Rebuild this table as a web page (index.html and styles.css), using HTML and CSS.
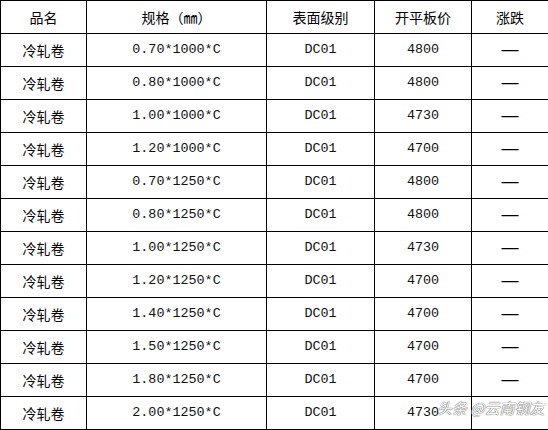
FILE: index.html
```html
<!DOCTYPE html>
<html lang="zh">
<head>
<meta charset="utf-8">
<link rel="stylesheet" href="styles.css">
</head>
<body>
<div class="wrap">
<table class="price">
<colgroup>
<col class="c1"><col class="c2"><col class="c3"><col class="c4"><col class="c5">
</colgroup>
<thead>
<tr><th>品名</th><th>规格（㎜）</th><th>表面级别</th><th>开平板价</th><th>涨跌</th></tr>
</thead>
<tbody>
<tr><td>冷轧卷</td><td class="m">0.70*1000*C</td><td class="m">DC01</td><td class="m">4800</td><td class="d">—</td></tr>
<tr><td>冷轧卷</td><td class="m">0.80*1000*C</td><td class="m">DC01</td><td class="m">4800</td><td class="d">—</td></tr>
<tr><td>冷轧卷</td><td class="m">1.00*1000*C</td><td class="m">DC01</td><td class="m">4730</td><td class="d">—</td></tr>
<tr><td>冷轧卷</td><td class="m">1.20*1000*C</td><td class="m">DC01</td><td class="m">4700</td><td class="d">—</td></tr>
<tr><td>冷轧卷</td><td class="m">0.70*1250*C</td><td class="m">DC01</td><td class="m">4800</td><td class="d">—</td></tr>
<tr><td>冷轧卷</td><td class="m">0.80*1250*C</td><td class="m">DC01</td><td class="m">4800</td><td class="d">—</td></tr>
<tr><td>冷轧卷</td><td class="m">1.00*1250*C</td><td class="m">DC01</td><td class="m">4730</td><td class="d">—</td></tr>
<tr><td>冷轧卷</td><td class="m">1.20*1250*C</td><td class="m">DC01</td><td class="m">4700</td><td class="d">—</td></tr>
<tr><td>冷轧卷</td><td class="m">1.40*1250*C</td><td class="m">DC01</td><td class="m">4700</td><td class="d">—</td></tr>
<tr><td>冷轧卷</td><td class="m">1.50*1250*C</td><td class="m">DC01</td><td class="m">4700</td><td class="d">—</td></tr>
<tr><td>冷轧卷</td><td class="m">1.80*1250*C</td><td class="m">DC01</td><td class="m">4700</td><td class="d">—</td></tr>
<tr><td>冷轧卷</td><td class="m">2.00*1250*C</td><td class="m">DC01</td><td class="m">4730</td><td class="d"></td></tr>
</tbody>
</table>
<div class="watermark">头条 @云南钢友</div>
</div>
</body>
</html>
```
FILE: styles.css
```css
html, body {
  margin: 0;
  padding: 0;
  background: #fff;
}
.wrap {
  position: relative;
  width: 548px;
  height: 430px;
  overflow: hidden;
}
.price {
  border-collapse: collapse;
  table-layout: fixed;
  width: 548px;
  font-family: "Noto Sans CJK SC", sans-serif;
  font-size: 14px;
  color: #000;
}
.c1 { width: 86px; }
.c2 { width: 180px; }
.c3 { width: 108px; }
.c4 { width: 97px; }
.c5 { width: 77px; }
.price th, .price td {
  border: 1px solid #000;
  height: 32px;
  padding: 0;
  text-align: center;
  vertical-align: middle;
  font-weight: 400;
  line-height: 16px;
}
.price .m {
  font-family: "Liberation Mono", monospace;
  font-size: 13.4px;
  color: #111;
}
.price .d {
  font-family: "Liberation Sans", sans-serif;
  font-size: 17px;
  line-height: 18px;
}
.watermark {
  position: absolute;
  left: 437px;
  top: 397px;
  font-family: "Noto Sans CJK SC", sans-serif;
  font-size: 15px;
  font-style: italic;
  color: #fff;
  text-shadow: 0 0 1px #555, 0 0 1px #555;
  white-space: nowrap;
}
```
